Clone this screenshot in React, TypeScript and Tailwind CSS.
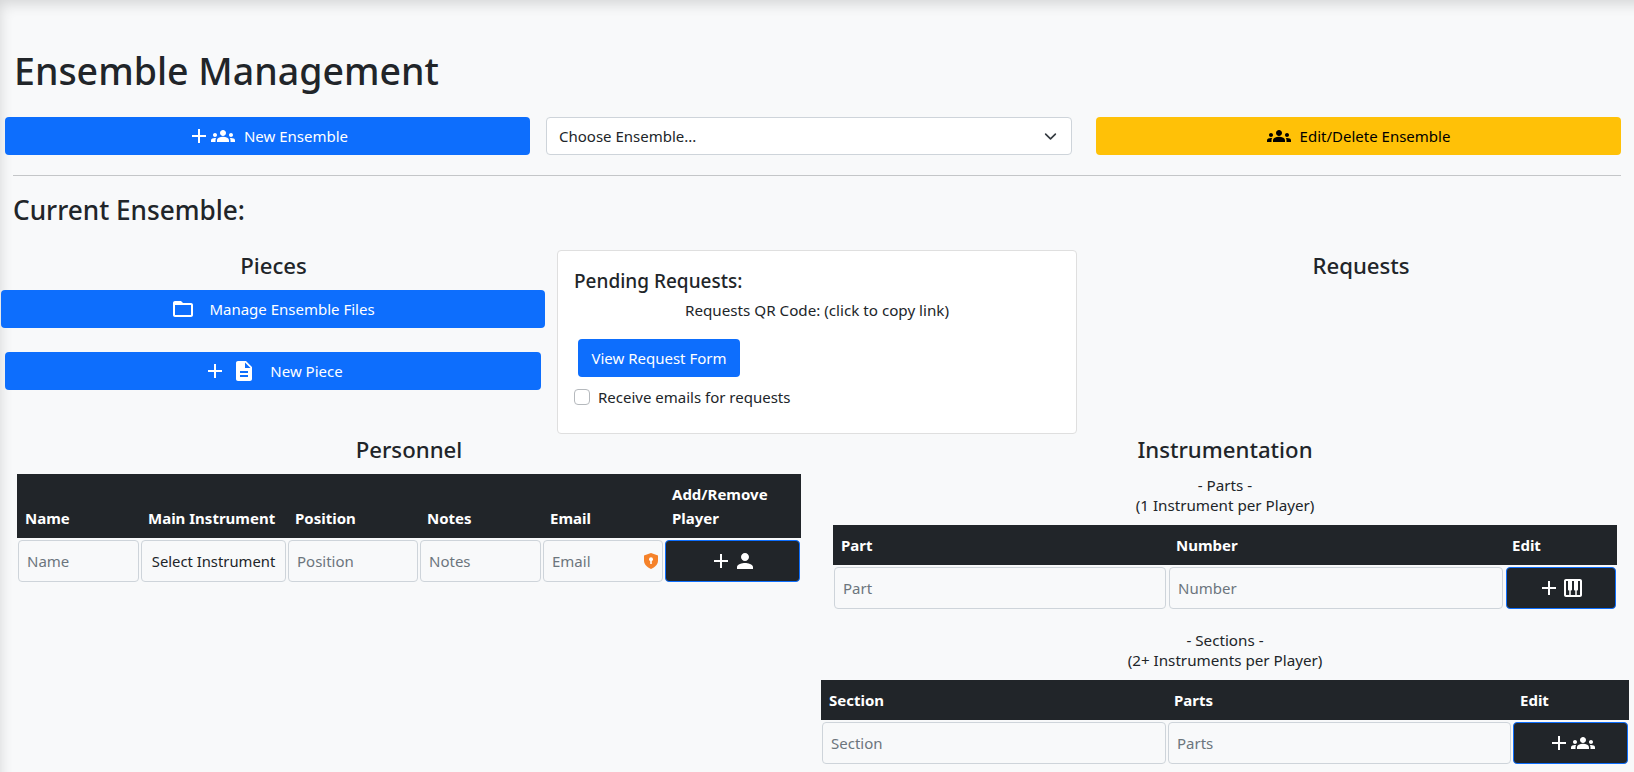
import { MdAdd, MdGroups, MdPerson, MdPiano, MdDescription, MdFolderOpen } from 'react-icons/md';

const ShieldIcon = () => (
  <svg width="14" height="16" viewBox="0 0 14 16" className="shrink-0">
    <path d="M7 0l7 2.4v5.2c0 3.8-3 6.9-7 8.4-4-1.5-7-4.6-7-8.4V2.4z" fill="#f5822a" />
    <circle cx="7" cy="6.3" r="2" fill="#fff" />
    <rect x="6.2" y="7" width="1.6" height="4" fill="#fff" />
  </svg>
);

function BlueButton({ className, children }: { className: string; children: React.ReactNode }) {
  return (
    <button className={`h-[38px] flex items-center justify-center rounded-[4px] bg-[#0d6efd] text-white text-[15px] ${className}`}>
      {children}
    </button>
  );
}

function Field({ placeholder, className = '' }: { placeholder: string; className?: string }) {
  return (
    <input
      type="text"
      placeholder={placeholder}
      className={`w-full h-[42px] px-2 bg-[#f8f9fa] border border-[#ced4da] rounded-[4px] text-[15px] placeholder:text-[#6c757d] outline-none ${className}`}
    />
  );
}

function DarkButton({ children }: { children: React.ReactNode }) {
  return (
    <button className="w-full h-[42px] flex items-center justify-center rounded-[4px] bg-[#212529] border border-[#0d6efd] text-white">
      {children}
    </button>
  );
}

function InstrumentTable({
  width,
  headCols,
  rowCols,
  heads,
  placeholders,
  children,
}: {
  width: string;
  headCols: string;
  rowCols: string;
  heads: string[];
  placeholders: string[];
  children: React.ReactNode;
}) {
  return (
    <div className={width}>
      <div className={`grid ${headCols} h-[40px] bg-[#212529] text-white font-bold text-[15px] items-center`}>
        {heads.map((h) => (
          <div key={h} className="px-2">{h}</div>
        ))}
      </div>
      <div className={`grid ${rowCols} px-px pt-[2px]`}>
        {placeholders.map((p) => (
          <Field key={p} placeholder={p} />
        ))}
        {children}
      </div>
    </div>
  );
}

export default function App() {
  return (
    <div
      className="h-screen overflow-hidden bg-[#f8f9fa] text-[#212529] text-[15px] shadow-[inset_10px_14px_14px_-10px_rgba(0,0,0,0.14)]"
      style={{ fontFamily: '"Noto Sans", "Open Sans", sans-serif' }}
    >
      <h1 className="pt-[47px] pl-[14px] text-[37.5px] leading-[48px] font-[550]">Ensemble Management</h1>

      <div className="flex mt-[22px] pl-[5px]">
        <BlueButton className="w-[525px]">
          <MdAdd size={24} />
          <MdGroups size={24} />
          <span className="ml-[9px]">New Ensemble</span>
        </BlueButton>
        <div className="w-[526px] h-[38px] ml-[16px] px-3 flex items-center justify-between bg-white border border-[#ced4da] rounded-[4px]">
          <span>Choose Ensemble...</span>
          <svg width="13" height="13" viewBox="0 0 16 16" fill="none" stroke="#343a40" strokeWidth="2" strokeLinecap="round" strokeLinejoin="round" className="mr-[2px]">
            <path d="M2 5l6 6 6-6" />
          </svg>
        </div>
        <button className="w-[525px] h-[38px] ml-[24px] flex items-center justify-center gap-[9px] rounded-[4px] bg-[#ffc107] text-black">
          <MdGroups size={24} />
          <span>Edit/Delete Ensemble</span>
        </button>
      </div>

      <hr className="mt-[20px] ml-[13px] w-[1608px] border-t border-[#c4c6c8]" />

      <h3 className="mt-[17px] pl-[13px] text-[26.2px] leading-[34px] font-[550]">Current Ensemble:</h3>

      <div className="flex mt-[23px]">
        <div className="w-[546px] shrink-0 pl-px">
          <h4 className="text-center text-[22.2px] leading-[29px] font-[550] pt-[1px]">Pieces</h4>
          <BlueButton className="w-[544px] mt-[10px] gap-[14px]">
            <MdFolderOpen size={24} />
            <span>Manage Ensemble Files</span>
          </BlueButton>
          <BlueButton className="w-[536px] ml-[4px] mt-[24px]">
            <MdAdd size={24} />
            <MdDescription size={24} className="ml-[5px]" />
            <span className="ml-[14px]">New Piece</span>
          </BlueButton>
        </div>

        <div className="w-[520px] h-[184px] shrink-0 ml-[11px] px-4 pt-4 bg-white border border-[#dfdfdf] rounded-[4px]">
          <h5 className="text-[19px] leading-[24px] font-[550] pt-[2px]">Pending Requests:</h5>
          <p className="mt-[5px] leading-[24px] text-center text-[15.2px]">Requests QR Code: (click to copy link)</p>
          <button className="mt-[17px] ml-[4px] w-[162px] h-[38px] rounded-[4px] bg-[#0d6efd] text-white">View Request Form</button>
          <label className="mt-[9px] flex items-center gap-2">
            <span className="w-4 h-4 bg-white border border-[#b5b9bd] rounded-[4px]" />
            <span>Receive emails for requests</span>
          </label>
        </div>

        <div className="w-[568px] shrink-0">
          <h4 className="text-center text-[22.2px] leading-[29px] font-[550] pt-[1px]">Requests</h4>
        </div>
      </div>

      <div className="flex -mt-[1px]">
        <div className="w-[818px] shrink-0 pl-[17px]">
          <h4 className="w-[784px] text-center text-[22.2px] leading-[29px] font-[550] pt-[2px]">Personnel</h4>
          <table className="w-[784px] mt-[10px] table-fixed border-collapse">
            <colgroup>
              <col className="w-[123px]" />
              <col className="w-[147px]" />
              <col className="w-[132px]" />
              <col className="w-[123px]" />
              <col className="w-[122px]" />
              <col className="w-[137px]" />
            </colgroup>
            <thead className="bg-[#212529] text-white">
              <tr className="h-[64px] align-bottom text-left text-[15px] leading-[24px]">
                <th className="px-2 pb-2 font-bold">Name</th>
                <th className="px-2 pb-2 font-bold whitespace-nowrap">Main Instrument</th>
                <th className="px-2 pb-2 font-bold">Position</th>
                <th className="px-2 pb-2 font-bold">Notes</th>
                <th className="px-2 pb-2 font-bold">Email</th>
                <th className="px-2 pb-2 font-bold">Add/Remove Player</th>
              </tr>
            </thead>
            <tbody>
              <tr>
                <td className="px-px pt-[2px]"><Field placeholder="Name" /></td>
                <td className="px-px pt-[2px]">
                  <div className="h-[42px] flex items-center justify-center bg-[#f8f9fa] border border-[#ced4da] rounded-[4px] whitespace-nowrap text-[14.8px]">Select Instrument</div>
                </td>
                <td className="px-px pt-[2px]"><Field placeholder="Position" /></td>
                <td className="px-px pt-[2px]"><Field placeholder="Notes" /></td>
                <td className="px-px pt-[2px]">
                  <div className="relative">
                    <Field placeholder="Email" />
                    <span className="absolute right-[5px] top-[13px]"><ShieldIcon /></span>
                  </div>
                </td>
                <td className="px-px pt-[2px]">
                  <DarkButton>
                    <MdAdd size={24} />
                    <MdPerson size={24} />
                  </DarkButton>
                </td>
              </tr>
            </tbody>
          </table>
        </div>

        <div className="w-[814px] shrink-0 flex flex-col items-center">
          <h4 className="text-[22.2px] leading-[29px] font-[550] pt-[2px]">Instrumentation</h4>
          <p className="mt-[11px] text-center text-[15.2px] leading-[20px]">
            - Parts -<br />(1 Instrument per Player)
          </p>
          <div className="mt-[10px]">
            <InstrumentTable
              width="w-[784px]"
              headCols="grid-cols-[335px_336px_113px]"
              rowCols="grid-cols-[332px_3px_334px_3px_110px]"
              heads={['Part', 'Number', 'Edit']}
              placeholders={['Part']}
            >
              <span />
              <Field placeholder="Number" />
              <span />
              <DarkButton>
                <MdAdd size={24} />
                <MdPiano size={24} />
              </DarkButton>
            </InstrumentTable>
          </div>
          <p className="mt-[21px] text-center text-[15.2px] leading-[20px]">
            - Sections -<br />(2+ Instruments per Player)
          </p>
          <div className="mt-[10px]">
            <InstrumentTable
              width="w-[808px]"
              headCols="grid-cols-[345px_346px_117px]"
              rowCols="grid-cols-[344px_2px_343px_2px_115px]"
              heads={['Section', 'Parts', 'Edit']}
              placeholders={['Section']}
            >
              <span />
              <Field placeholder="Parts" />
              <span />
              <DarkButton>
                <MdAdd size={24} />
                <MdGroups size={24} />
              </DarkButton>
            </InstrumentTable>
          </div>
        </div>
      </div>
    </div>
  );
}
